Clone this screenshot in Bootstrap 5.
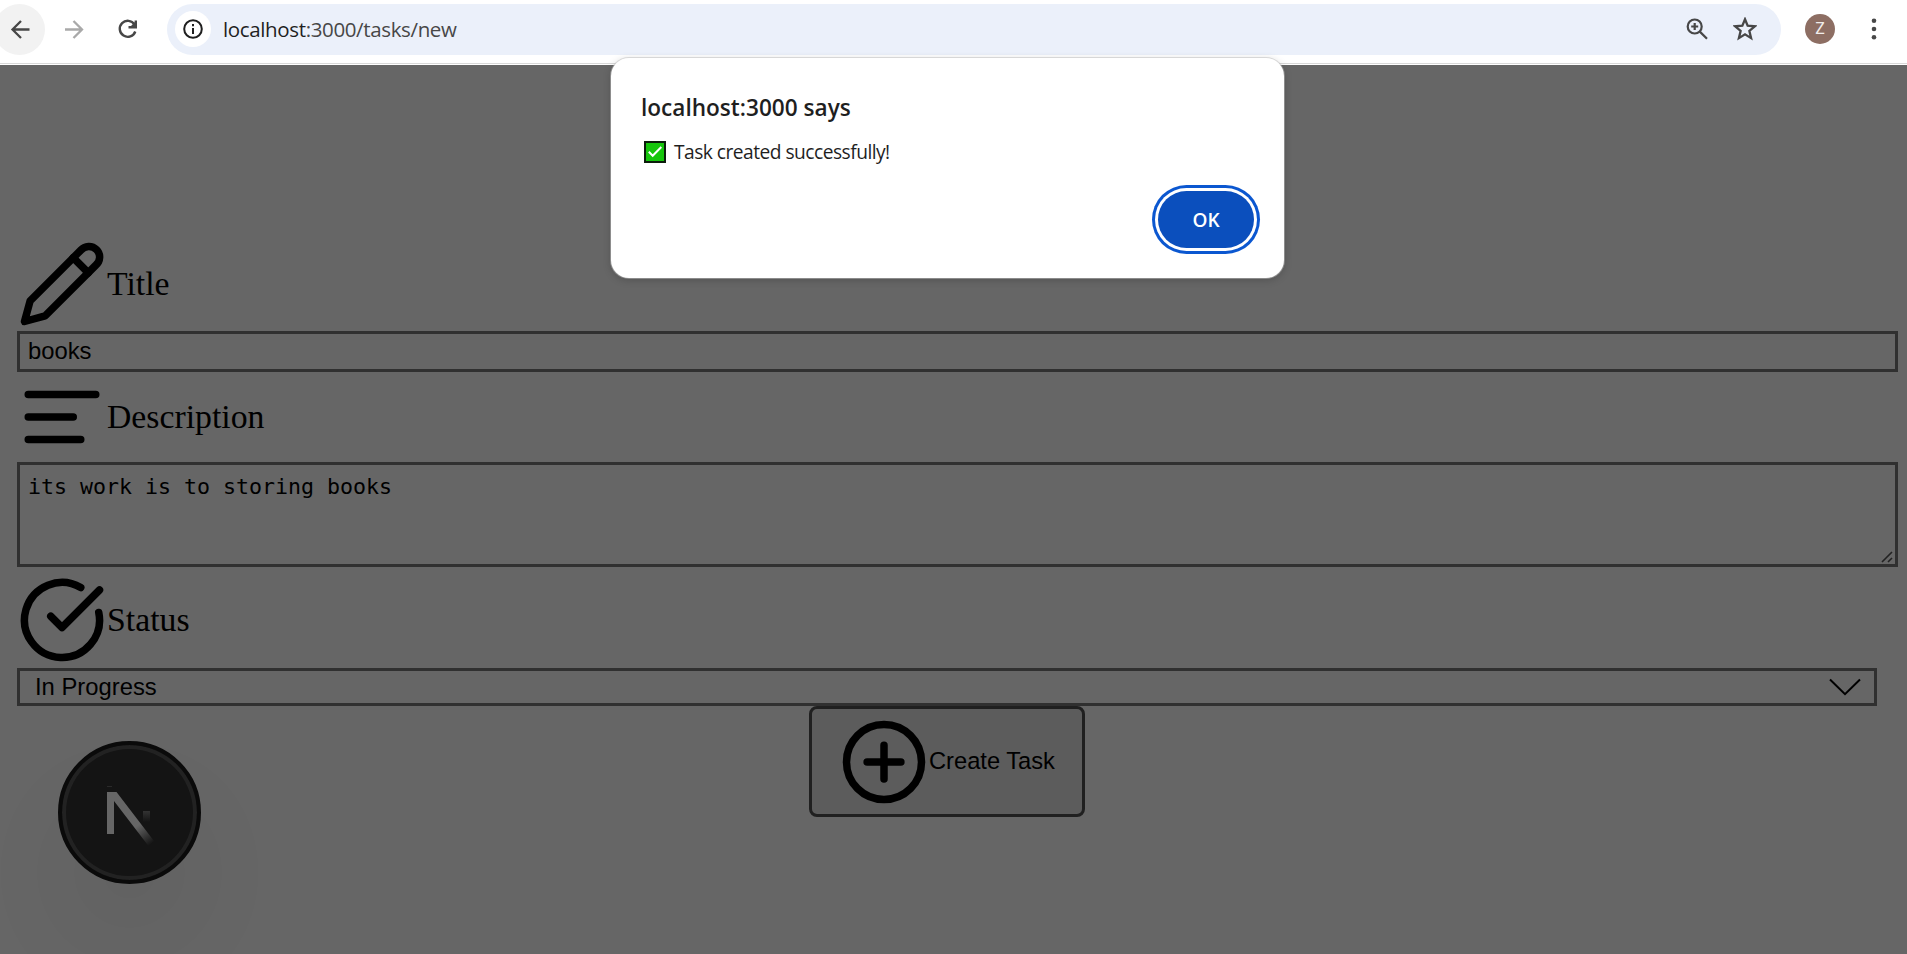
<!DOCTYPE html>
<html lang="en">
<head>
<meta charset="utf-8">
<title>New task</title>
<link href="https://cdn.jsdelivr.net/npm/bootstrap@5.3.0/dist/css/bootstrap.min.css" rel="stylesheet">
<script src="https://cdn.jsdelivr.net/npm/bootstrap@5.3.0/dist/js/bootstrap.bundle.min.js"></script>
<style>
body{width:1907px;height:954px;overflow:hidden;background:#666;color:#000;font-family:"Open Sans","Noto Sans",sans-serif}
.toolbar{height:65px;background:#fff;box-shadow:inset 0 -1px #fff,inset 0 -2px #d9d9d9;padding-bottom:7px}
.back-btn{width:51px;height:51px;margin-left:-6px;padding-left:2px;background:#f2f2f2}
.tool-ic{width:27px;height:27px;flex:none}
.omnibox{width:1614px;height:51px;background:#ebf0fa;border-radius:26px;margin-left:26px;padding:0 24px 0 8px}
.site-info{width:36px;height:36px;background:#fff}
.url-text{font-size:20.5px;letter-spacing:-.36px;line-height:28px;color:#474747;margin-left:12px;white-space:nowrap}
.url-text b{font-weight:400;color:#1f1f1f}
.avatar{width:30px;height:30px;background:#8d6e63;color:#f1edeb;font-size:16px;font-family:Roboto,sans-serif;margin-left:24px}
.page{padding:174px 9px 0 17px}
.lbl{height:90px;font:33.75px/40px "Liberation Serif",serif}
.lucide{width:90px;height:90px;flex:none;fill:none;stroke:#000;stroke-width:2;stroke-linecap:round;stroke-linejoin:round}
.field{border:3px solid #303030;border-radius:0;background:transparent;font:23.8px/28px "Liberation Sans",sans-serif;color:#000;padding:0 8px}
.f-title{height:41px;margin-top:2px;padding-bottom:2px}
.f-desc{height:105px;font:21.6px/28px "DejaVu Sans Mono",monospace;padding-top:8px;position:relative;margin-bottom:8px}
.grip{position:absolute;right:2px;bottom:1px}
.f-status{height:38px;width:1860px;padding:0 13px 0 15px;margin-top:3px}
.create-btn{width:276px;height:111px;border:3px solid #202020;border-radius:8px;background:#5c5c5c;margin-left:792px;padding-left:27px;font:23.7px/28px "Liberation Sans",sans-serif}
.create-btn span{padding-bottom:2px}
.next-badge{position:absolute;left:58px;top:741px;width:143px;height:143px;background:#141414;border:4px solid #0a0a0a;box-shadow:inset 0 0 0 4px #222,0 60px 100px rgba(0,0,0,.05)}
.alert-box{position:absolute;left:611px;top:58px;width:673px;height:220px;background:#fff;border-radius:18px;box-shadow:0 0 0 1px rgba(190,190,190,.5),0 2px 8px rgba(0,0,0,.2);padding:33px 24px 24px 30px}
.alert-h{font-size:22.6px;line-height:34px;font-weight:600;color:#1f1f1f;white-space:nowrap}
.alert-m{font-size:19.2px;letter-spacing:-.52px;line-height:28px;color:#1f1f1f;margin:13px 0 0 1px;white-space:nowrap;height:28px}
.ok{width:96px;height:57px;background:#0b4fbd;color:#fff;font-weight:600;font-size:19px;padding-top:1px;border-radius:29px;box-shadow:0 0 0 3px #fff,0 0 0 6px #0b57d0;margin:25px 6px 0 auto}
</style>
</head>
<body>
<header class="toolbar d-flex align-items-center">
  <div class="back-btn rounded-circle d-flex align-items-center justify-content-center flex-shrink-0">
    <svg class="tool-ic" viewBox="0 0 27 27" fill="none" stroke="#474747" stroke-width="2.3"><path d="M22.5 13.5H6M14 5L5.5 13.5L14 22"/></svg>
  </div>
  <svg class="tool-ic" style="margin-left:15px" viewBox="0 0 27 27" fill="none" stroke="#a9a9a9" stroke-width="2.3"><path d="M5 13.5H21.5M13.5 5L22 13.5L13.5 22"/></svg>
  <svg class="tool-ic" style="margin-left:27px" viewBox="0 0 27 27" fill="none" stroke="#474747" stroke-width="2.4"><path d="M20.5 8.5A8 8 0 1 0 21.3 15.5"/><path d="M21.8 4.5V11.3H14.5"/><path d="M22 5V11H16Z" fill="#474747" stroke="none"/></svg>
  <div class="omnibox d-flex align-items-center">
    <div class="site-info rounded-circle d-flex align-items-center justify-content-center">
      <svg width="20" height="20" viewBox="0 0 20 20" fill="none" stroke="#1f1f1f" stroke-width="2"><circle cx="10" cy="10" r="8.8"/><path d="M10 9V15M10 5V7.2"/></svg>
    </div>
    <div class="url-text"><b>localhost</b>:3000/tasks/new</div>
    <svg class="ms-auto" width="24" height="24" viewBox="0 0 24 24" fill="none" stroke="#474747" stroke-width="2.2"><circle cx="9.7" cy="9.5" r="7"/><path d="M14.8 14.6L22 21.8M9.7 6V13M6.2 9.5H13.2"/></svg>
    <svg style="margin-left:24px" width="24" height="24" viewBox="0 0 24 24" fill="none" stroke="#474747" stroke-width="2"><path d="M12 3.4L14.3 9L20.5 9.5L15.8 13.5L17.3 19.8L12 16.5L6.7 19.8L8.2 13.5L3.5 9.500L9.7 9Z" transform="translate(-1.8 -1.6) scale(1.15)"/></svg>
  </div>
  <div class="avatar rounded-circle d-flex align-items-center justify-content-center">Z</div>
  <svg style="margin-left:34px" width="10" height="24" viewBox="0 0 10 24" fill="#474747"><circle cx="5" cy="3.8" r="2.3"/><circle cx="5" cy="12" r="2.3"/><circle cx="5" cy="20.2" r="2.3"/></svg>
</header>

<main class="page">
  <div class="lbl d-flex align-items-center"><svg class="lucide" viewBox="0 0 24 24"><path d="M17 3a2.85 2.83 0 1 1 4 4L7.5 20.5 2 22l1.5-5.5Z"/><path d="m15 5 4 4"/></svg>Title</div>
  <div class="field f-title d-flex align-items-center">books</div>
  <div class="lbl d-flex align-items-center"><svg class="lucide" viewBox="0 0 24 24"><path d="M3 6H21M3 12H15M3 18H17"/></svg>Description</div>
  <div class="field f-desc">its work is to storing books
    <svg class="grip" width="12" height="12" viewBox="0 0 12 12" stroke="#222" stroke-width="1.6"><path d="M1 11L11 1M7 11L11 7"/></svg>
  </div>
  <div class="lbl d-flex align-items-center"><svg class="lucide" viewBox="0 0 24 24"><path d="M21.801 10A10 10 0 1 1 17 3.335"/><path d="m9 11 3 3L22 4"/></svg>Status</div>
  <div class="field f-status d-flex align-items-center justify-content-between">In Progress
    <svg width="32" height="18" viewBox="0 0 32 18" fill="none" stroke="#000" stroke-width="2"><path d="M1 1.5L16 16.2L31 1.5"/></svg>
  </div>
  <div class="create-btn d-flex align-items-center"><svg class="lucide" viewBox="0 0 24 24"><circle cx="12" cy="12" r="10"/><path d="M7.500 12h9M12 7.500v9"/></svg><span>Create Task</span></div>
</main>

<div class="next-badge rounded-circle d-flex">
  <svg width="135" height="135" viewBox="62 745 135 135" fill="none">
    <defs>
      <linearGradient id="diag" gradientUnits="userSpaceOnUse" x1="137" y1="826" x2="151" y2="844"><stop stop-color="#666"/><stop offset="1" stop-color="#666" stop-opacity="0"/></linearGradient>
      <linearGradient id="stub" x1="0" y1="0" x2="0" y2="1"><stop stop-color="#333"/><stop offset="1" stop-color="#333" stop-opacity="0"/></linearGradient>
    </defs>
    <path d="M107 792H116.5L154 841L148.500 846L114 801V834H107Z" fill="url(#diag)"/>
    <path d="M143 811H150V822H143Z" fill="url(#stub)"/>
    <path d="M107 786.500H112" stroke="#2a2a2a"/>
  </svg>
</div>

<section class="alert-box">
  <div class="alert-h">localhost:3000 says</div>
  <div class="alert-m d-flex align-items-center">
    <svg style="margin:0 8px 0 2px" width="22" height="22" viewBox="0 0 22 22" fill="none"><path d="M1 1H21V21H1Z" fill="#16c60c" stroke="#0c1c0c" stroke-width="2"/><path d="M4.800 10.800L8.700 14.800L17.300 6" stroke="#fff" stroke-width="2"/></svg><span>Task created successfully!</span>
  </div>
  <div class="ok d-flex align-items-center justify-content-center">OK</div>
</section>
</body>
</html>
